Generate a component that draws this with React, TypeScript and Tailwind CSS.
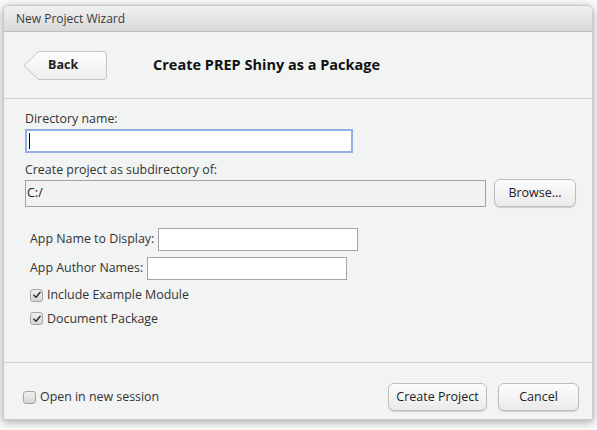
import React from "react";

const font = { fontFamily: '"Open Sans", "Segoe UI", sans-serif' };

function Check({ checked }: { checked?: boolean }) {
  return (
    <span className="flex h-[13px] w-[13px] items-center justify-center rounded-[3px] border border-[#a5a5a5] bg-gradient-to-b from-[#f0f0f0] to-[#d6d6d6]">
      {checked && (
        <svg viewBox="0 0 12 12" className="h-[10px] w-[10px]">
          <path d="M2.2 6.2 L4.8 8.8 L9.8 2.8" fill="none" stroke="#333" strokeWidth="1.8" strokeLinecap="round" strokeLinejoin="round" />
        </svg>
      )}
    </span>
  );
}

function Btn({ children, className = "" }: { children: React.ReactNode; className?: string }) {
  return (
    <div
      className={
        "flex h-[28px] items-center justify-center rounded-[6px] border border-[#bdbdbd] bg-gradient-to-b from-[#fdfdfd] to-[#eaeaea] text-[12.5px] text-[#222] shadow-[0_1px_1px_rgba(0,0,0,0.15)] " +
        className
      }
    >
      {children}
    </div>
  );
}

export default function App() {
  return (
    <div className="h-[430px] w-[597px] overflow-hidden bg-[#fafafa] pl-[3px] pt-[5px]" style={font}>
      <div className="flex h-[415px] w-[590px] flex-col overflow-hidden rounded-t-[6px] border border-[#c9c9c9] bg-[#f2f3f3] shadow-[0_2px_8px_rgba(0,0,0,0.35)]">
        {/* title bar */}
        <div className="flex h-[26px] items-center border-b border-[#bdbdbd] bg-gradient-to-b from-[#f1f1f1] to-[#d9d9d9] pl-[12px] text-[12px] text-[#3a3a3a]">
          New Project Wizard
        </div>

        {/* header */}
        <div className="flex h-[67px] items-center border-b border-[#d3d3d3] pl-[19px]">
          <div className="relative flex h-[29px] w-[84px] items-center">
            <svg viewBox="0 0 84 29" className="absolute inset-0 h-[29px] w-[84px]">
              <defs>
                <linearGradient id="bg" x1="0" y1="0" x2="0" y2="1">
                  <stop offset="0" stopColor="#fcfcfc" />
                  <stop offset="1" stopColor="#eeeeee" />
                </linearGradient>
              </defs>
              <path d="M15.5 0.5 H80 Q83.5 0.5 83.5 4 V25 Q83.5 28.5 80 28.5 H15.5 L1 14.5 Z" fill="url(#bg)" stroke="#c4c4c4" />
            </svg>
            <span className="relative pl-[25px] text-[12.5px] font-bold text-[#222]">Back</span>
          </div>
          <div className="ml-[46px] text-[14.5px] font-bold text-[#111]">Create PREP Shiny as a Package</div>
        </div>

        {/* body */}
        <div className="flex flex-1 flex-col pl-[21px] pt-[12px] text-[12.4px] text-[#333]">
          <div className="leading-[16px]">Directory name:</div>
          <div className="mt-[2px] h-[24px] w-[328px] border-2 border-[#8fb1e3] bg-white pl-[2px] pt-[2px]">
            <div className="h-[16px] w-px bg-black" />
          </div>
          <div className="mt-[9px] leading-[16px]">Create project as subdirectory of:</div>
          <div className="mt-[1px] flex items-center gap-[8px]">
            <div className="flex h-[27px] w-[461px] items-center border border-[#a3a3a3] bg-[#f2f2f2] pl-[1px] text-[12.5px] text-[#222]">
              C:/
            </div>
            <Btn className="w-[82px]">Browse...</Btn>
          </div>

          <div className="mt-[21px] flex flex-col gap-[6px] pl-[5px]">
            <div className="flex items-center gap-[4px]">
              <span>App Name to Display:</span>
              <div className="h-[23px] w-[200px] border border-[#a3a3a3] bg-white" />
            </div>
            <div className="flex items-center gap-[4px]">
              <span>App Author Names:</span>
              <div className="h-[23px] w-[200px] border border-[#a3a3a3] bg-white" />
            </div>
          </div>
          <div className="mt-[6px] flex flex-col gap-[5px] pl-[5px]">
            <div className="flex items-center gap-[4px]">
              <Check checked />
              <span>Include Example Module</span>
            </div>
            <div className="flex items-center gap-[4px]">
              <Check checked />
              <span>Document Package</span>
            </div>
          </div>
        </div>

        {/* footer */}
        <div className="flex h-[57px] items-start border-t border-[#d3d3d3] pt-[20px] pl-[19px] pr-[13px]">
          <div className="mt-[5px] flex items-center gap-[4px] text-[12.4px] text-[#333]">
            <Check />
            <span>Open in new session</span>
          </div>
          <div className="ml-auto flex gap-[11px]">
            <Btn className="w-[99px] border-[#8a8a8a] shadow-[0_0_0_1px_#d0d0d0]">Create Project</Btn>
            <Btn className="w-[81px]">Cancel</Btn>
          </div>
        </div>
      </div>
    </div>
  );
}
